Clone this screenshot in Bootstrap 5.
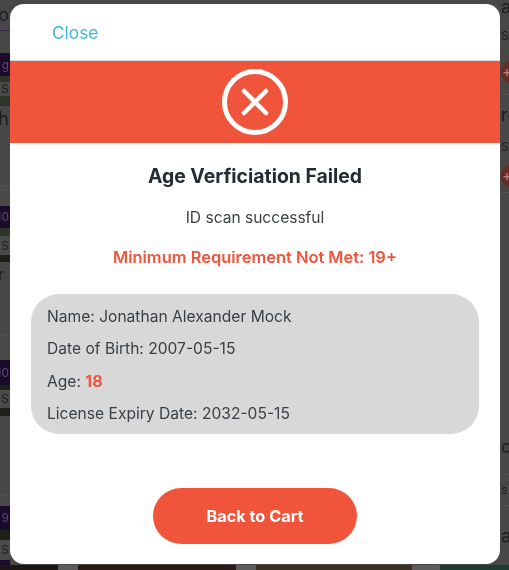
<!DOCTYPE html>
<html lang="en">
<head>
<meta charset="utf-8">
<title>Age Verification Failed</title>
<link rel="stylesheet" href="https://cdn.jsdelivr.net/npm/bootstrap@5.3.0/dist/css/bootstrap.min.css">
<style>
html,body{height:100%;overflow:hidden;background:#474747;font-family:"Inter","Liberation Sans",sans-serif;}
.under-page{height:570px;display:grid;grid-template-rows:565px 5px;filter:blur(.6px);color:#1d1d1d;font-size:19px;line-height:1;}
.under-main{display:flex;justify-content:space-between;overflow:hidden;}
.strip-left,.strip-right{display:grid;overflow:hidden;}
.strip-left{width:10px;direction:rtl;grid-template-rows:31px 22px 23px 6px 14px 10px 80px 20px 22px 8px 19px 7px 73px 25px 25px 5px 18px 8px 79px 11px 24px 10px 20px 5px;}
.strip-right{width:9px;grid-template-rows:13px 45px 27px 9px 1px 39px 25px 33px 1px 281px 1px 30px 1px 59px;}
.strip-left>div,.strip-right>div{white-space:nowrap;font-size:12px;display:flex;align-items:center;padding:0 1px;}
.strip-left .big,.strip-right .big{font-size:18px;}
.tone-purple{background:#1c0a2c;color:#5b4a68;}
.tone-green{background:#2e3526;}
.tone-dark{background:#1d2018;}
.tone-light{background:#4a4a4a;}
.tone-line-purple{border-bottom:1px solid #3a2450;}
.tone-line{border-bottom:1px solid #525252;}
.tone-gray{background:#4a4a4a;}
.strip-left .text-split{flex-direction:column;justify-content:space-between;align-items:flex-end;padding:4px 1px 20px;}
.strip-right .tail-text{align-items:flex-end;padding-bottom:18px;}
.plus-dot{width:28px;height:26px;border-radius:50%;background:#6b2a20;color:#a98b85;font-size:15px;padding-left:1px;}
.under-strip{display:grid;grid-template-columns:58px 20px 158px 20px 156px 28px 1fr;}
.shot-a{background:#1c1713;}.shot-b{background:#5c5c5c;}.shot-c{background:#2a1a16;}.shot-d{background:#3a3020;}.shot-e{background:#1f3a30;}

.age-dialog{width:490px;max-width:none;margin:4px 0 0 10px;}
.age-card{height:560px;border:0;border-radius:14px;overflow:hidden;color:#3a3f45;font-size:15.6px;}
.age-head{height:57px;flex:none;padding:1px 0 0 42px;border-bottom:1px solid #dcdcdc;}
.age-close{color:#3fb5dc;font-size:17.3px;text-decoration:none;}
.age-band{height:82px;background:#f0553b;}
.age-title{font-size:19.4px;font-weight:700;color:#252b33;line-height:24px;margin:21px 0 0;}
.age-sub{font-size:15.55px;line-height:24px;margin:18px 0 0;}
.age-alert{color:#f0553b;font-size:16.45px;font-weight:600;line-height:24px;margin:15px 0 0;}
.age-box{width:448px;height:140px;margin:25px 0 0 21px;padding:6.5px 16px 5.5px;background:#d8d8d8;border-radius:28px;}
.age-box p{line-height:32px;margin:0;}
.age-num{color:#f0553b;font-size:16px;font-weight:700;}
.age-back{width:204px;height:56px;margin:54px auto 0;background:#f0553b;border:0;border-radius:28px;font-size:16.3px;font-weight:700;color:#fff;}
.age-back:hover{background:#f0553b;color:#fff;}
</style>
</head>
<body>
<div class="under-page" aria-hidden="true">
  <div class="under-main">
    <div class="strip-left">
      <div class="tone-line-purple big">o</div>
      <div></div>
      <div class="tone-purple">g</div>
      <div class="tone-green"></div>
      <div class="tone-gray">S</div>
      <div class="tone-green"></div>
      <div class="tone-line text-split big"><span>gh</span><span>.</span></div>
      <div class="tone-light"></div>
      <div class="tone-purple">10</div>
      <div class="tone-green"></div>
      <div class="tone-gray">S</div>
      <div class="tone-dark"></div>
      <div class="tone-line text-split big"><span>er</span><span>r.</span></div>
      <div class="tone-light"></div>
      <div class="tone-purple">10</div>
      <div class="tone-dark"></div>
      <div class="tone-gray">S</div>
      <div class="tone-dark"></div>
      <div class="tone-line text-split big"><span>g</span><span>r.</span></div>
      <div class="tone-light"></div>
      <div class="tone-purple">9</div>
      <div class="tone-dark"></div>
      <div class="tone-gray">S</div>
      <div class="tone-purple"></div>
    </div>
    <div class="strip-right">
      <div class="big">ath</div>
      <div>S</div>
      <div><span class="plus-dot d-flex align-items-center">+</span></div>
      <div></div>
      <div class="tone-line"></div>
      <div class="big">rc</div>
      <div>S</div>
      <div><span class="plus-dot d-flex align-items-center">+</span></div>
      <div class="tone-line"></div>
      <div class="big tail-text">ot</div>
      <div class="tone-line"></div>
      <div>s</div>
      <div class="tone-line"></div>
      <div class="big">al</div>
    </div>
  </div>
  <div class="under-strip">
    <div class="shot-a"></div><div class="shot-b"></div><div class="shot-c"></div><div class="shot-b"></div><div class="shot-d"></div><div class="shot-b"></div><div class="shot-e"></div>
  </div>
</div>

<div class="modal d-block" tabindex="-1">
  <div class="modal-dialog age-dialog">
    <div class="modal-content age-card">
      <div class="modal-header age-head">
        <a href="#" class="age-close">Close</a>
      </div>
      <div class="age-band d-flex align-items-center justify-content-center">
        <svg width="68" height="68" viewBox="0 0 68 68" fill="none" stroke="#fff" aria-hidden="true">
          <circle cx="34" cy="34" r="30.5" stroke-width="5"/>
          <path d="M23 23 L45 45 M45 23 L23 45" stroke-width="4.5" stroke-linecap="round"/>
        </svg>
      </div>
      <div class="modal-body p-0 d-flex flex-column">
        <h1 class="age-title text-center">Age Verficiation Failed</h1>
        <p class="age-sub text-center">ID scan successful</p>
        <p class="age-alert text-center">Minimum Requirement Not Met: 19+</p>
        <div class="age-box">
          <p>Name: Jonathan Alexander Mock</p>
          <p>Date of Birth: 2007-05-15</p>
          <p>Age: <span class="age-num">18</span></p>
          <p>License Expiry Date: 2032-05-15</p>
        </div>
        <button type="button" class="btn age-back">Back to Cart</button>
      </div>
    </div>
  </div>
</div>
<script src="https://cdn.jsdelivr.net/npm/bootstrap@5.3.0/dist/js/bootstrap.bundle.min.js"></script>
</body>
</html>
